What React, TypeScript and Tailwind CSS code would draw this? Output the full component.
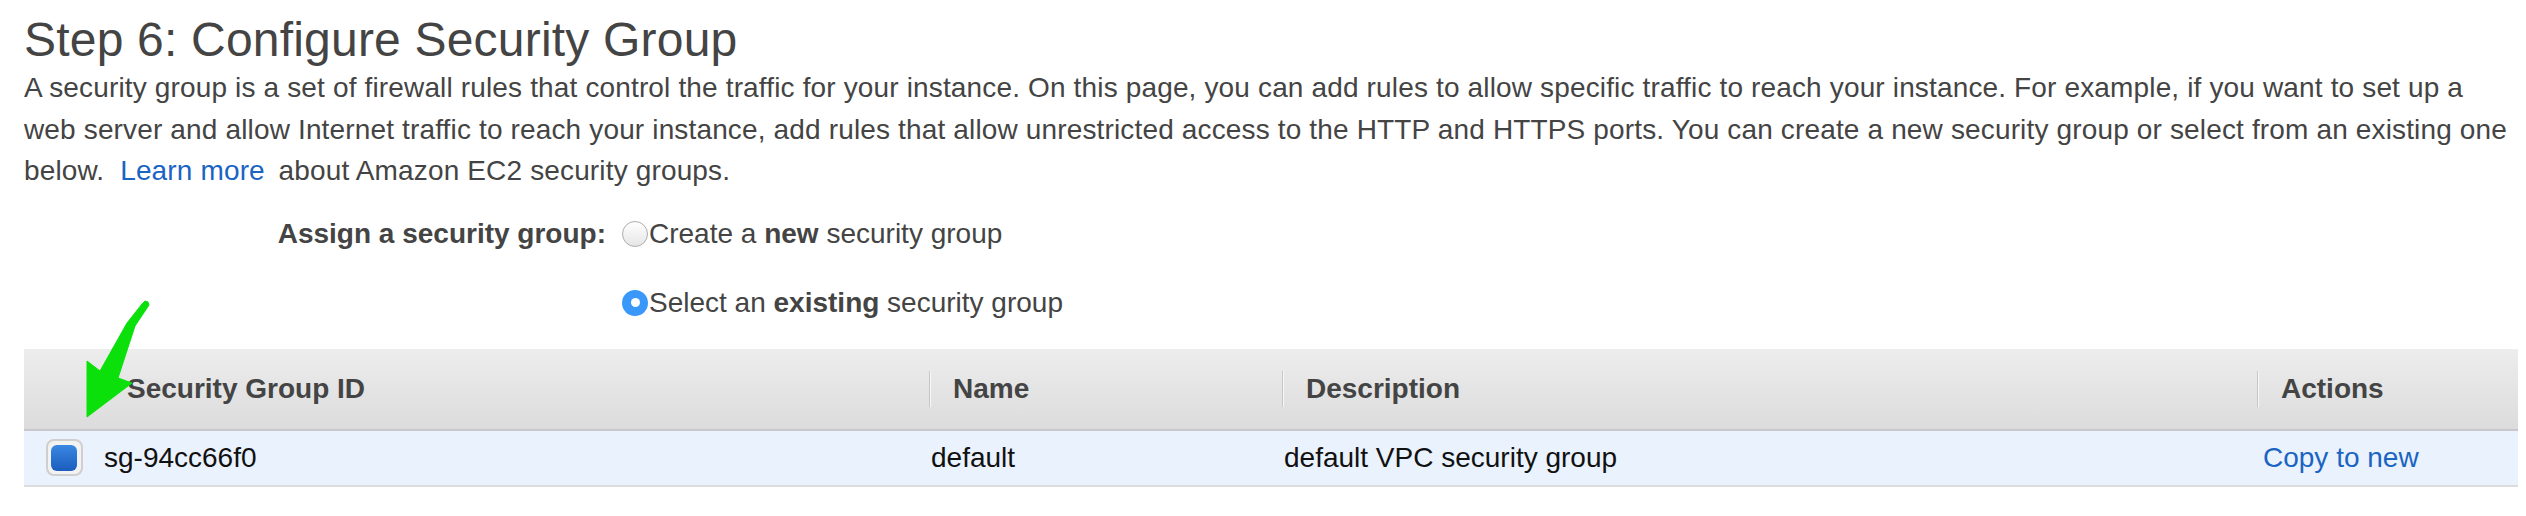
import React from 'react';

const columns = [
  { key: 'check', label: '' },
  { key: 'id', label: 'Security Group ID' },
  { key: 'name', label: 'Name' },
  { key: 'description', label: 'Description' },
  { key: 'actions', label: 'Actions' },
];

function HeaderCell({ label, divider }: { label: string; divider: boolean }) {
  return (
    <div className="flex items-center h-full">
      {divider && (
        <div className="flex h-[36px]">
          <div className="w-px h-full bg-[#c6c6c6]" />
          <div className="w-px h-full bg-[#f7f7f7]" />
        </div>
      )}
      <span className={divider ? 'pl-[22px]' : 'pl-[23px]'}>{label}</span>
    </div>
  );
}

function GreenArrow() {
  // Skitch style annotation arrow pointing at the row checkbox
  return (
    <svg
      className="absolute left-[80px] top-[295px] w-[75px] h-[130px] pointer-events-none"
      viewBox="80 295 75 130"
    >
      <polygon
        points="142,304 145,301 148,302 149,305 135,326 118,378 132,383 87,417 87,361 100,371 127,323"
        fill="#0be00b"
        stroke="#0be00b"
        strokeWidth="1"
        strokeLinejoin="round"
      />
    </svg>
  );
}

export default function App() {
  return (
    <div className="relative w-[2526px] h-[516px] bg-white pl-[24px] pr-[8px] font-['Liberation_Sans',Arial,sans-serif] text-[#444]">
      <h1 className="pt-[16px] text-[48px] leading-[48px] font-normal tracking-[0.2px]">
        Step 6: Configure Security Group
      </h1>

      <p className="mt-[3px] text-[28px] leading-[41.5px] tracking-[0.15px]">
        A security group is a set of firewall rules that control the traffic for your instance. On this page, you can
        add rules to allow specific traffic to reach your instance. For example, if you want to set up a
        <br />
        web server and allow Internet traffic to reach your instance, add rules that allow unrestricted access to the
        HTTP and HTTPS ports. You can create a new security group or select from an existing one
        <br />
        below.{'\u00a0 '}
        <a className="text-[#1a64c2]">Learn more</a>
        {'\u2009 '}about Amazon EC2 security groups.
      </p>

      {/* Assign a security group */}
      <div className="mt-[21px] flex text-[28px] leading-[42px]">
        <div className="w-[582px] text-right font-bold">Assign a security group:</div>
        <div className="ml-[16px] flex flex-col gap-[27px]">
          <label className="flex items-center h-[42px]">
            <span className="w-[26px] h-[26px] rounded-full border border-[#adadad] bg-linear-to-b from-white to-[#e6e6e6]" />
            <span className="ml-px">
              Create a <b>new</b> security group
            </span>
          </label>
          <label className="flex items-center h-[42px]">
            <span className="flex items-center justify-center w-[26px] h-[26px] rounded-full bg-[#3b98fb]">
              <span className="w-[9px] h-[9px] rounded-full bg-white" />
            </span>
            <span className="ml-px">
              Select an <b>existing</b> security group
            </span>
          </label>
        </div>
      </div>

      {/* Security groups table */}
      <div className="mt-[25px] text-[28px]">
        <div className="grid grid-cols-[80px_825px_353px_975px_261px] h-[82px] border-b-2 border-[#c8c8cc] bg-linear-to-b from-[#ededed] to-[#dcdcdc] font-bold text-[#444]">
          {columns.map((c, i) =>
            c.key === 'check' ? <div key={c.key} /> : <HeaderCell key={c.key} label={c.label} divider={i > 1} />
          )}
        </div>
        <div className="grid grid-cols-[80px_825px_353px_975px_261px] h-[56px] items-center border-b-2 border-[#dcdcdc] bg-[#eaf2fe] text-[#111]">
          <div className="flex justify-center">
            <div className="flex items-center justify-center w-[37px] h-[37px] rounded-[8px] border-2 border-[#cfcfcf] bg-[#f2f2f2]">
              <div className="w-[26px] h-[26px] rounded-[6px] bg-linear-to-b from-[#3a88e3] to-[#1a5dbc]" />
            </div>
          </div>
          <div>sg-94cc66f0</div>
          <div className="pl-[2px]">default</div>
          <div className="pl-[2px]">default VPC security group</div>
          <div className="pl-[6px]">
            <a className="text-[#1a64c2]">Copy to new</a>
          </div>
        </div>
      </div>

      <GreenArrow />
    </div>
  );
}
